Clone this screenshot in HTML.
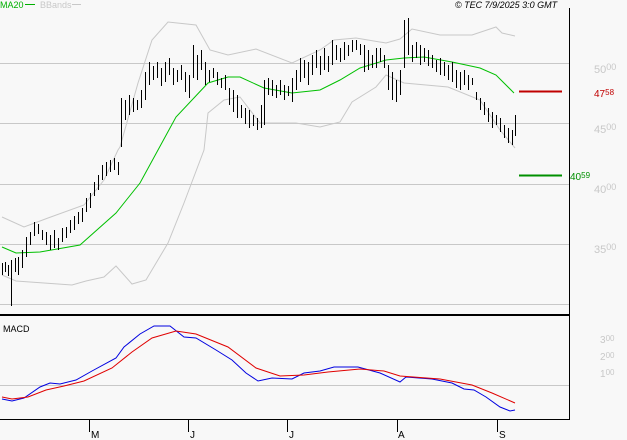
<!DOCTYPE html>
<html><head><meta charset="utf-8"><style>
html,body{margin:0;padding:0;background:#f8f8f8;}
svg{display:block;font-family:"Liberation Sans",sans-serif;}
</style></head><body>
<svg width="627" height="440" viewBox="0 0 627 440" xmlns="http://www.w3.org/2000/svg">
<rect width="627" height="440" fill="#f8f8f8"/>
<g stroke="#c8c8c8" stroke-width="1">
<path d="M0 63.5H569M0 123.5H569M0 184.5H569M0 244.5H569M0 304.5H569M0 385.5H569"/>
</g>
<g fill="none" stroke="#c8c8c8" stroke-width="1">
<polyline points="2,217 24,227 48,218 84,205 104,180 118,150 120,147 138,83 152,40 168,22 196,25 210,50 228,55 256,49 292,63 320,50 334,40 356,38 386,43 400,39 412,29 440,35 472,35 496,27 502,33 515,36"/>
<polyline points="2,275 16,281 72,285 86,281 104,277 116,266 132,284 146,280 168,243 184,203 204,150 208,113 224,100 240,97 260,123 296,123 320,127 340,122 352,102 376,87 386,75 404,83 448,87 480,100 500,130 515,148"/>
</g>
<polyline fill="none" stroke="#00c000" stroke-width="1" points="2,247 16,253 40,252 80,245 116,213 140,183 158,150 176,117 208,83 228,77 240,77 264,88 292,93 320,90 340,80 360,68 386,60 404,58 424,57 452,62 480,68 496,75 514,93"/>
<g transform="translate(0.5,0)">
<path fill="none" stroke="#000" stroke-width="1" shape-rendering="crispEdges" d="M2 263V275M5 262V272M8 265V276M11 260V306M15 258V272M18 257V275M22 250V268M26 237V257M30 232V245M34 222V236M38 224V234M42 230V240M46 232V245M50 235V250M54 230V248M58 238V250M62 228V242M66 227V238M70 220V233M74 216V230M78 212V224M82 208V222M86 198V212M90 193V208M94 182V196M98 175V190M102 165V180M106 162V176M110 160V172M114 158V170M118 162V175M121 98V147M125 100V120M129 95V115M133 98V112M137 100V110M141 90V108M145 72V100M149 62V85M153 66V80M157 62V78M161 68V86M165 62V82M169 58V75M173 68V85M177 70V82M181 65V80M185 72V92M189 75V98M193 45V78M197 55V80M201 50V70M205 62V85M209 70V82M213 68V78M217 72V85M221 78V88M225 75V90M229 88V105M233 90V112M237 95V118M241 105V118M245 108V124M249 110V128M253 115V126M257 118V130M261 105V128M264 80V125M268 78V95M272 80V96M276 85V98M280 80V95M284 85V100M288 86V96M292 78V102M296 70V90M300 58V82M304 60V78M308 62V85M312 55V75M316 50V68M320 56V75M324 48V70M328 56V72M332 40V65M336 45V60M340 48V62M344 42V60M348 45V56M352 40V52M356 40V50M360 44V55M364 45V72M368 50V70M372 55V68M376 48V68M380 48V62M384 55V68M388 65V90M392 72V100M396 80V102M400 70V95M404 20V68M408 18V55M412 45V62M416 42V58M420 45V65M424 48V62M428 50V66M432 55V68M436 60V72M440 58V75M444 62V76M448 65V80M452 62V82M456 70V88M460 72V90M464 70V85M468 75V90M472 78V85M476 92V100M480 98V110M484 102V115M488 108V122M492 112V128M496 115V125M500 118V132M504 125V138M508 128V143M512 130V145M515 115V136"/>
</g>
<path stroke="#c00000" stroke-width="2" d="M519 91.5H562"/>
<path stroke="#009000" stroke-width="2" d="M519 175.5H562"/>
<text x="594" y="97" font-size="10" fill="#c00000">47<tspan font-size="8" dy="-2">58</tspan></text>
<text x="570" y="180" font-size="10" fill="#009000">40<tspan font-size="8" dy="-2">59</tspan></text>
<g font-size="11" fill="#c8c8c8">
<text x="594" y="73">50<tspan font-size="9" dy="-3">00</tspan></text>
<text x="594" y="133">45<tspan font-size="9" dy="-3">00</tspan></text>
<text x="594" y="193">40<tspan font-size="9" dy="-3">00</tspan></text>
<text x="594" y="253">35<tspan font-size="9" dy="-3">00</tspan></text>
<text x="600" y="343" font-size="10">3<tspan font-size="8" dy="-2">00</tspan></text>
<text x="600" y="360" font-size="10">2<tspan font-size="8" dy="-2">00</tspan></text>
<text x="600" y="377" font-size="10">1<tspan font-size="8" dy="-2">00</tspan></text>
</g>
<polyline fill="none" stroke="#0000e0" stroke-width="1" points="2,399 12,401 24,398 40,387 50,383 60,384 76,380 92,371 116,358 124,347 140,334 154,326 170,326 184,337 196,338 216,350 232,360 246,373 258,381 272,378 292,379 304,373 320,371 334,367 358,367 380,373 400,382 406,377 432,379 452,383 464,389 474,390 486,397 500,407 510,411 515,410"/>
<polyline fill="none" stroke="#e00000" stroke-width="1" points="2,397 12,399 28,397 46,390 64,386 84,381 112,368 132,352 152,338 176,331 196,334 228,347 256,368 280,376 304,375 328,372 360,369 384,371 400,376 440,379 472,385 492,393 515,403"/>
<path stroke="#000" stroke-width="2" d="M0 315H570"/>
<path stroke="#000" stroke-width="1" d="M569.5 8V420M0 419.5H570M89.5 419V432M188.5 419V432M287.5 419V432M397.5 419V432M497.5 419V432"/>
<g font-size="10" fill="#000">
<text x="91" y="438">M</text><text x="190" y="438">J</text><text x="289" y="438">J</text><text x="398" y="438">A</text><text x="499" y="438">S</text>
<text x="3" y="332" font-size="9">MACD</text>
<text x="455" y="8" font-size="9" font-style="italic">© TEC 7/9/2025 3:0 GMT</text>
</g>
<text x="0" y="8" font-size="9" fill="#00b000">MA20</text>
<path stroke="#00b000" d="M25 4.5H35"/>
<text x="40" y="8" font-size="9" fill="#c8c8c8">BBands</text>
<path stroke="#c8c8c8" d="M72 4.5H81"/>
</svg>
</body></html>
